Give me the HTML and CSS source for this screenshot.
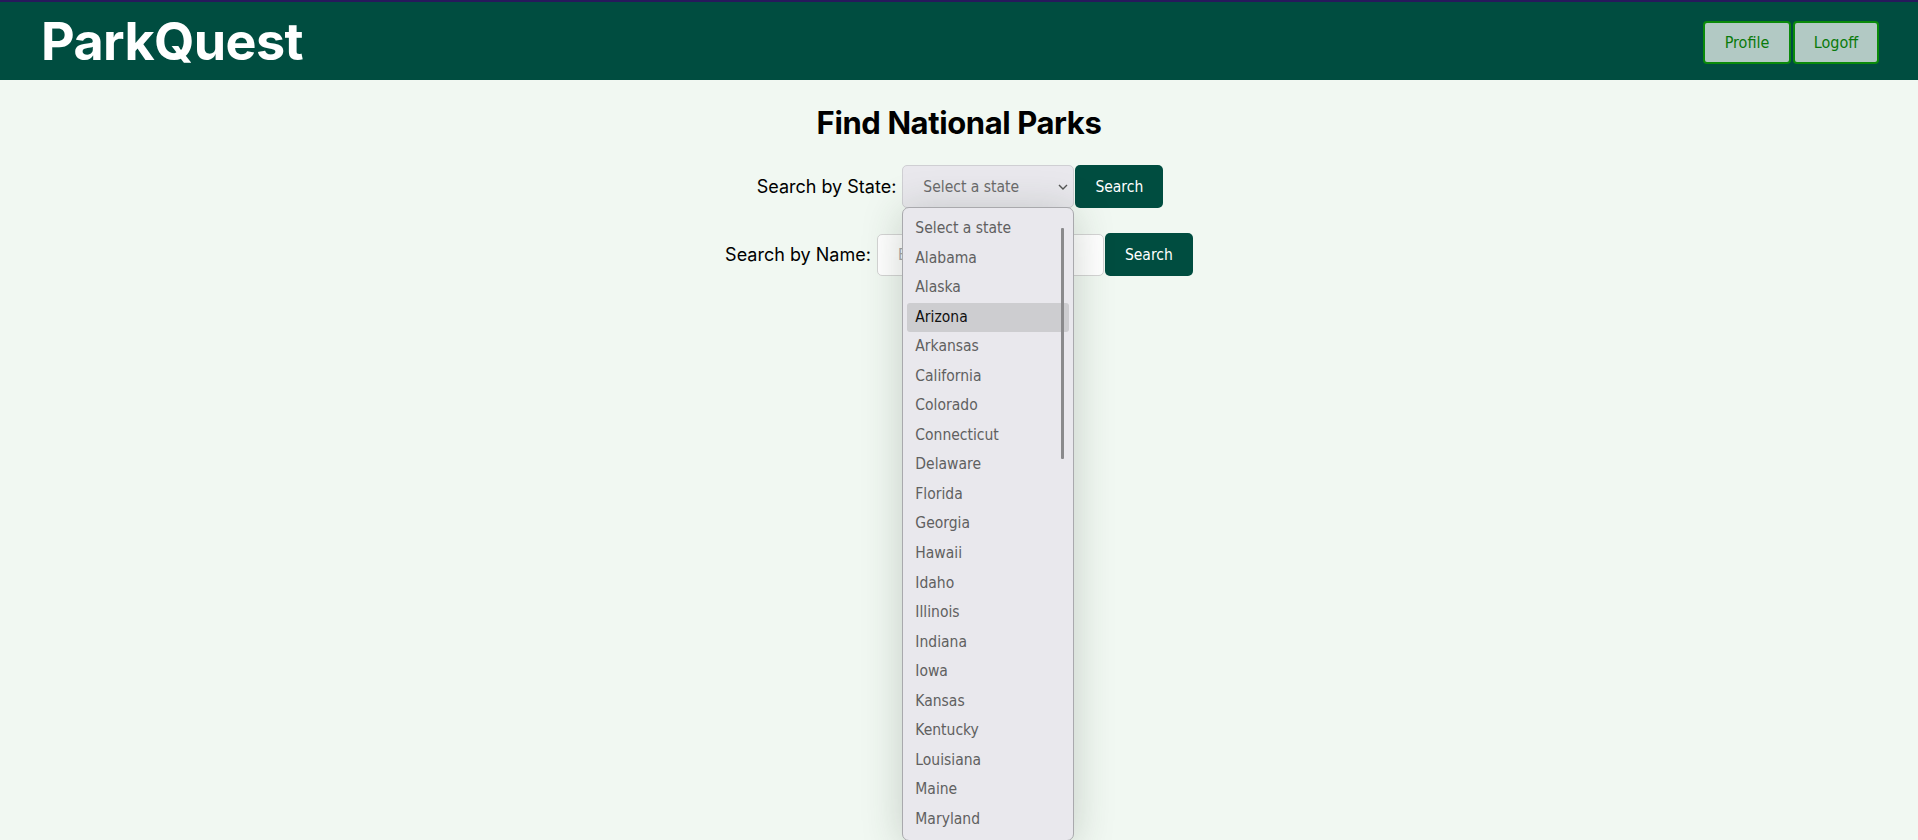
FILE: index.html
```html
<!DOCTYPE html>
<html lang="en">
<head>
<meta charset="utf-8">
<title>ParkQuest</title>
<link rel="stylesheet" href="styles.css">
</head>
<body>
<header class="topbar">
  <div class="logo">ParkQuest</div>
  <nav class="nav">
    <button class="nav-btn nav-btn-profile">Profile</button>
    <button class="nav-btn nav-btn-logoff">Logoff</button>
  </nav>
</header>
<main class="main">
  <h1 class="title">Find National Parks</h1>
  <div class="row row-state">
    <label class="row-label">Search by State:</label>
    <div class="select-wrap">
      <div class="select">
        <span class="select-text">Select a state</span>
        <svg class="chevron" width="10" height="6" viewBox="0 0 10 6"><path d="M1 1 L5 5 L9 1" fill="none" stroke="#555" stroke-width="1.4"/></svg>
      </div>
      <div class="popup">
        <div class="popup-item">Select a state</div>
        <div class="popup-item">Alabama</div>
        <div class="popup-item">Alaska</div>
        <div class="popup-item popup-item-active">Arizona</div>
        <div class="popup-item">Arkansas</div>
        <div class="popup-item">California</div>
        <div class="popup-item">Colorado</div>
        <div class="popup-item">Connecticut</div>
        <div class="popup-item">Delaware</div>
        <div class="popup-item">Florida</div>
        <div class="popup-item">Georgia</div>
        <div class="popup-item">Hawaii</div>
        <div class="popup-item">Idaho</div>
        <div class="popup-item">Illinois</div>
        <div class="popup-item">Indiana</div>
        <div class="popup-item">Iowa</div>
        <div class="popup-item">Kansas</div>
        <div class="popup-item">Kentucky</div>
        <div class="popup-item">Louisiana</div>
        <div class="popup-item">Maine</div>
        <div class="popup-item">Maryland</div>
        <div class="popup-scrollbar"></div>
      </div>
    </div>
    <button class="search-btn">Search</button>
  </div>
  <div class="row row-name">
    <label class="row-label">Search by Name:</label>
    <input class="name-input" type="text" placeholder="Enter park name">
    <button class="search-btn">Search</button>
  </div>
</main>
</body>
</html>
```
FILE: styles.css
```css
html, body {
  margin: 0;
  padding: 0;
}
body {
  background: #f1f8f2;
  font-family: Inter, "Noto Sans", sans-serif;
  color: #000;
  height: 840px;
  overflow: hidden;
}
.topbar {
  box-sizing: border-box;
  height: 80px;
  border-top: 2px solid #27195c;
  background: #004d40;
  display: flex;
  align-items: center;
  justify-content: space-between;
  padding: 0 39px 0 41px;
}
.logo {
  color: #fff;
  font-weight: 700;
  font-size: 52px;
  letter-spacing: -0.6px;
  line-height: 1;
  margin-top: 1px;
}
.nav {
  display: flex;
  gap: 2px;
  margin-top: 2px;
}
.nav-btn {
  box-sizing: border-box;
  height: 43px;
  border: 2px solid #0a8a0a;
  border-radius: 4px;
  background: #b2c9c4;
  color: #0a7a0a;
  font-family: "DejaVu Sans Condensed", "DejaVu Sans", sans-serif;
  font-stretch: condensed;
  font-size: 16px;
  padding: 0;
}
.nav-btn-profile { width: 88px; }
.nav-btn-logoff { width: 86px; }
.main {
  display: flex;
  flex-direction: column;
  align-items: center;
}
.title {
  font-size: 31px;
  font-weight: 700;
  margin: 23px 0 23px;
  line-height: 39px;
  letter-spacing: -0.4px;
}
.row {
  display: flex;
  align-items: center;
  height: 43px;
}
.row-state { margin-left: 2px; }
.row-name { margin-top: 25px; }
.row-label {
  font-size: 18px;
  margin-right: 6px;
}
.select-wrap {
  position: relative;
  margin-right: 1px;
}
.select {
  box-sizing: border-box;
  width: 172px;
  height: 43px;
  background: #e9e8ed;
  border: 1px solid #cfcfd3;
  border-radius: 5px;
  display: flex;
  align-items: center;
  justify-content: space-between;
  padding: 0 5px 0 20px;
}
.select-text, .popup-item, .search-btn, .name-input {
  font-family: "DejaVu Sans Condensed", "DejaVu Sans", sans-serif;
  font-stretch: condensed;
  font-size: 15.5px;
}
.select-text {
  color: #6b6b6b;
}
.chevron {
  display: block;
}
.search-btn {
  box-sizing: border-box;
  width: 88px;
  height: 43px;
  border: none;
  border-radius: 5px;
  background: #004d40;
  color: #fff;
  padding: 0;
}
.name-input {
  box-sizing: border-box;
  width: 227px;
  height: 42px;
  background: #fff;
  border: 1px solid #d4d4d4;
  border-radius: 5px;
  padding: 0 20px;
  margin-right: 1px;
  outline: none;
}
.name-input::placeholder {
  color: #a8a8a8;
}
.popup {
  position: absolute;
  left: 0;
  top: 42px;
  box-sizing: border-box;
  width: 172px;
  height: 634px;
  background: #e9e8ed;
  border: 1px solid #a9a9ad;
  border-radius: 7px;
  box-shadow: 0 4px 40px rgba(40, 60, 40, 0.22);
  padding: 6px 4px 6px 4px;
  z-index: 10;
}
.popup-item {
  height: 29.55px;
  line-height: 29.55px;
  padding-left: 8px;
  color: #606060;
  border-radius: 3px;
  white-space: nowrap;
}
.popup-item-active {
  background: #cdcdd0;
  color: #111;
}
.popup-scrollbar {
  position: absolute;
  left: 158px;
  top: 20px;
  width: 3px;
  height: 231px;
  background: #8a8a8c;
  border-radius: 1px;
}
```
